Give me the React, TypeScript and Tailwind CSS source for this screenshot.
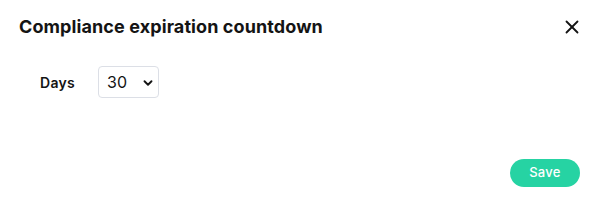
import { X, ChevronDown } from "lucide-react";

export default function App() {
  return (
    <div className="w-[598px] h-[208px] bg-white flex flex-col font-['Inter',sans-serif] text-[#141414]">
      <div className="flex items-center justify-between pl-[19px] pr-[15px] pt-[13px]">
        <h2 className="text-[18px] font-bold tracking-[0.1px]">Compliance expiration countdown</h2>
        <button className="text-[#141414]">
          <X className="h-[22px] w-[22px]" strokeWidth={2} />
        </button>
      </div>
      <div className="flex items-center gap-[23px] pl-[40px] mt-[26px]">
        <span className="text-[14px] font-semibold tracking-[0.3px]">Days</span>
        <div className="relative w-[61px] h-[32px] rounded-[4px] border border-[#dcdfe6]">
          <select className="appearance-none w-full h-full bg-transparent pl-[8px] text-[16px] outline-none">
            <option>30</option>
            <option>60</option>
            <option>90</option>
          </select>
          <ChevronDown className="absolute right-[3px] top-[9px] h-[14px] w-[14px] pointer-events-none" strokeWidth={3.2} />
        </div>
      </div>
      <div className="flex justify-end pr-[18px] mt-auto mb-[21px]">
        <button className="h-[28px] w-[70px] rounded-full bg-[#26d3a3] text-white text-[13px] font-medium tracking-[0.3px]">
          Save
        </button>
      </div>
    </div>
  );
}
